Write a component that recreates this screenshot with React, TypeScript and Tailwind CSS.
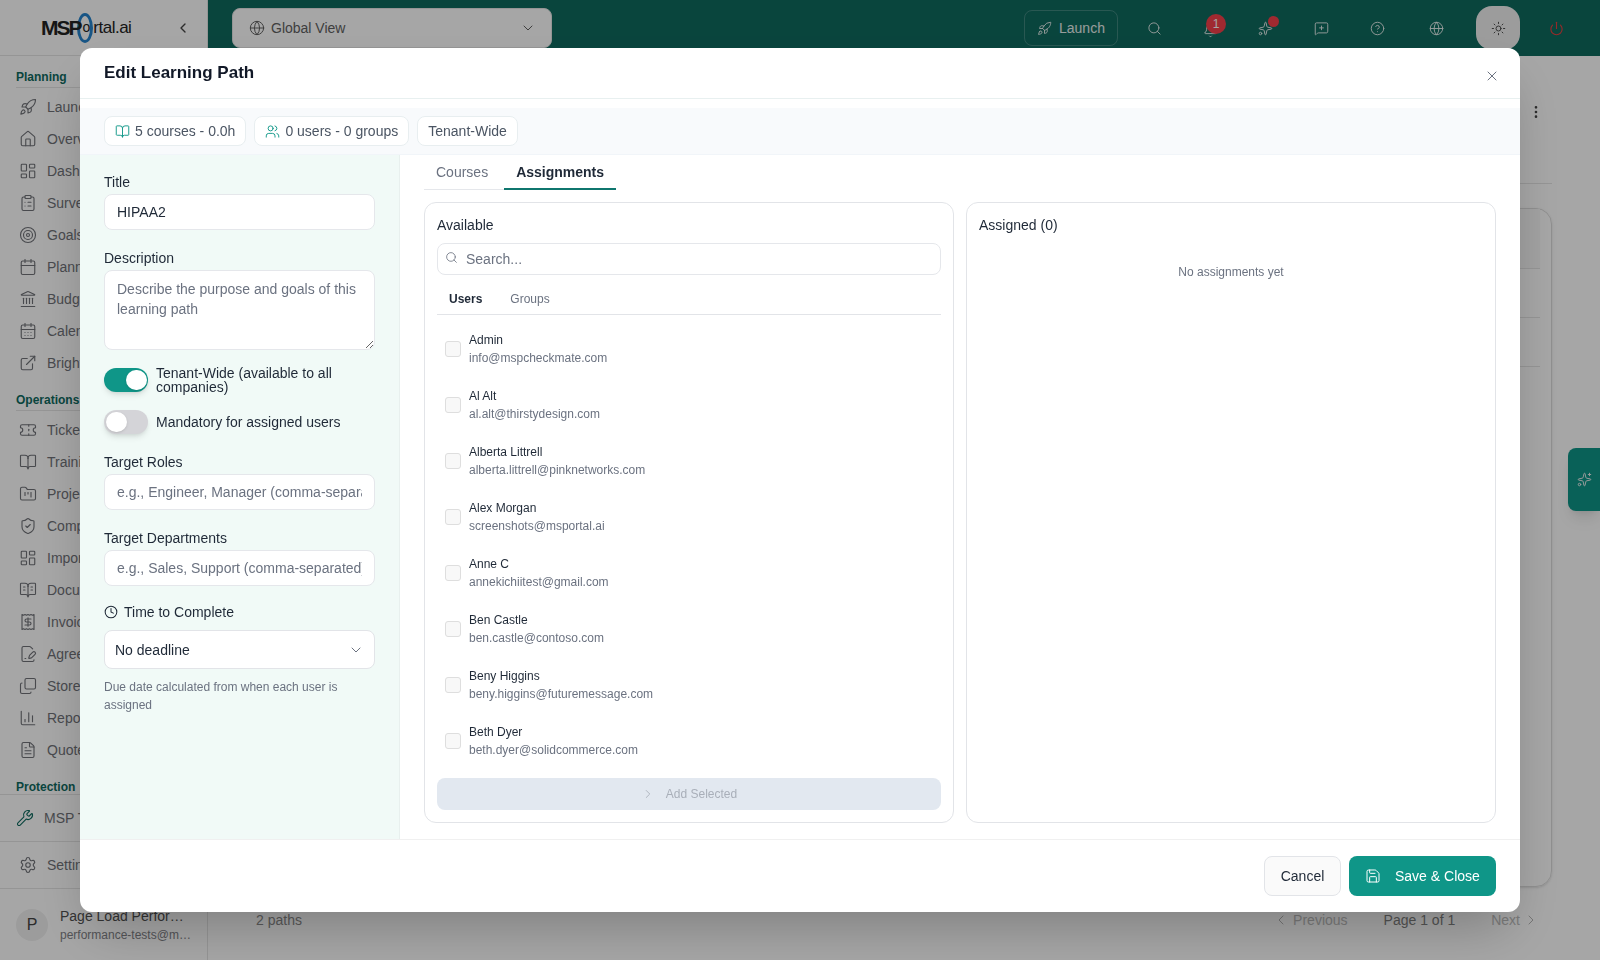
import React from "react";
import {
  Rocket, Home, LayoutDashboard, ClipboardList, Target, Calendar, Landmark, CalendarDays, ExternalLink,
  Ticket, BookOpen, FolderKanban, ShieldCheck, BookOpenText, Receipt, FileSignature, Copy, ChartColumn, FileText,
  Wrench, Settings, Globe, ChevronDown, ChevronLeft, ChevronRight, Search, Bell, Sparkles, MessageSquarePlus,
  CircleHelp, Sun, Power, EllipsisVertical, X, Users, Clock, Save,
} from "lucide-react";

const planning: [any, string, string?][] = [
  [Rocket, "Launch"], [Home, "Overview"], [LayoutDashboard, "Dashboard"], [ClipboardList, "Surveys"], [Target, "Goals"],
  [Calendar, "Planner"], [Landmark, "Budget"], [CalendarDays, "Calendar"], [ExternalLink, "BrightGauge"],
];
const operations: [any, string, string?][] = [
  [Ticket, "Tickets"], [BookOpen, "Training"], [FolderKanban, "Projects"], [ShieldCheck, "Compliance"], [LayoutDashboard, "Import"],
  [BookOpenText, "Documents"], [Receipt, "Invoices"], [FileSignature, "Agreements"], [Copy, "Storefront", "-scale-y-100"],
  [ChartColumn, "Reports"], [FileText, "Quotes"],
];
const users = [
  ["Admin", "info@mspcheckmate.com"],
  ["Al Alt", "al.alt@thirstydesign.com"],
  ["Alberta Littrell", "alberta.littrell@pinknetworks.com"],
  ["Alex Morgan", "screenshots@msportal.ai"],
  ["Anne C", "annekichiitest@gmail.com"],
  ["Ben Castle", "ben.castle@contoso.com"],
  ["Beny Higgins", "beny.higgins@futuremessage.com"],
  ["Beth Dyer", "beth.dyer@solidcommerce.com"],
];

function NavItem({ icon: Icon, label, cls }: { icon: any; label: string; cls?: string }) {
  return (
    <div className="flex h-8 items-center gap-[10px] pl-[19px] text-sm text-[#707278]">
      <Icon size={18} strokeWidth={1.5} className={cls} />
      <span>{label}</span>
    </div>
  );
}

function SectionLabel({ children }: { children: React.ReactNode }) {
  return (
    <div className="ml-4 border-b border-[#e5e5e5] pb-[2px] text-xs leading-[16px] font-semibold text-[#0f6a5f]">{children}</div>
  );
}

function TopIcon({ children, cls = "" }: { children: React.ReactNode; cls?: string }) {
  return <div className={`flex items-center justify-center ${cls}`}>{children}</div>;
}

function Toggle({ on }: { on?: boolean }) {
  return (
    <div className={`flex h-6 w-11 shrink-0 items-center rounded-full px-[1.5px] shadow-md ${on ? "justify-end bg-[#0f9688]" : "justify-start bg-[#d4d4d8]"}`}>
      <div className="h-5 w-[21px] rounded-full bg-white shadow" />
    </div>
  );
}

function Label({ children }: { children: React.ReactNode }) {
  return <div className="text-sm leading-5 text-[#1f2937]">{children}</div>;
}

function TextField({ value, placeholder }: { value?: string; placeholder?: string }) {
  return (
    <input
      readOnly
      defaultValue={value}
      placeholder={placeholder}
      className="mt-[2px] block h-[36px] w-full rounded-lg border border-[#e5e7eb] bg-white px-3 text-sm text-[#1f2937] outline-none placeholder:text-[#6b7280]"
    />
  );
}

export default function App() {
  return (
    <div className="relative flex h-screen w-screen overflow-hidden bg-white font-['Liberation_Sans',Arial,sans-serif]">
      {/* Page behind the dialog */}
      <aside className="flex h-full w-[208px] shrink-0 flex-col border-r border-[#e5e5e5]">
        <div className="relative flex h-[56px] shrink-0 items-center border-b border-[#e5e5e5] pl-[41px] text-[#222]">
          <div className="absolute top-[13px] left-[77px] h-[30px] w-[16px] rounded-[50%] border-[3.5px] border-[#2583cc]" />
          <span className="relative text-[21px] font-bold tracking-[-2px]">MSP</span>
          <span className="relative ml-[2px] text-[14px] font-medium">o</span>
          <span className="relative ml-[3px] text-[17px] tracking-[-0.5px]">rtal.ai</span>
          <ChevronLeft size={16} strokeWidth={2} className="absolute top-[20px] left-[175px] text-[#444]" />
        </div>
        <div className="h-[738px] shrink-0 overflow-hidden pt-[13px]">
          <SectionLabel>Planning</SectionLabel>
          <div className="mt-[3px]">
            {planning.map(([I, l, c]) => <NavItem key={l} icon={I} label={l} cls={c} />)}
          </div>
          <div className="mt-[13px]">
            <SectionLabel>Operations</SectionLabel>
          </div>
          <div className="mt-[3px]">
            {operations.map(([I, l, c]) => <NavItem key={l} icon={I} label={l} cls={c} />)}
          </div>
          <div className="mt-[13px]">
            <SectionLabel>Protection</SectionLabel>
          </div>
        </div>
        <div className="flex h-[47px] shrink-0 items-center gap-[10px] border-t border-[#e5e5e5] pl-4 text-sm text-[#707278]">
          <Wrench size={18} strokeWidth={1.5} className="text-[#0f6a5f]" />
          <span>MSP Tools</span>
        </div>
        <div className="flex h-[47px] shrink-0 items-center gap-[10px] border-t border-[#e5e5e5] pl-[19px] text-sm text-[#707278]">
          <Settings size={18} strokeWidth={1.5} />
          <span>Settings</span>
        </div>
        <div className="flex flex-1 items-center gap-3 border-t border-[#e5e5e5] pl-4 pr-4">
          <div className="flex h-8 w-8 shrink-0 items-center justify-center rounded-full bg-[#f0f0f0] text-base text-[#444]">P</div>
          <div className="min-w-0 flex-1">
            <div className="truncate text-sm leading-5 text-[#505050]">Page Load Performance Tests</div>
            <div className="truncate text-xs leading-[18px] text-[#7f8186]">performance-tests@msportal.ai</div>
          </div>
        </div>
      </aside>

      <div className="flex min-w-0 flex-1 flex-col">
        <header className="flex h-[56px] shrink-0 items-center bg-[#0f6a5f] pl-6 text-[#e8f0ee]">
          <div className="flex h-10 w-[320px] items-center rounded-lg border border-[#e5e5e5] bg-white pr-[15px] pl-[16px] text-sm text-[#616161]">
            <Globe size={16} strokeWidth={1.5} />
            <span className="ml-[6px] flex-1">Global View</span>
            <ChevronDown size={16} strokeWidth={1.5} />
          </div>
          <div className="ml-[472px] flex h-[36px] w-[94px] items-center gap-[7px] rounded-lg border border-white/20 pl-[12px] text-sm">
            <Rocket size={15} strokeWidth={1.5} />
            <span>Launch</span>
          </div>
          <TopIcon cls="ml-[29px]"><Search size={15} strokeWidth={1.5} /></TopIcon>
          <div className="relative ml-[41px] flex items-center justify-center pt-1">
            <Bell size={15} strokeWidth={1.5} />
            <div className="absolute top-[-5px] left-[3px] flex h-5 w-5 items-center justify-center rounded-full bg-[#f4404a] text-[12px] text-white">1</div>
          </div>
          <div className="relative ml-[40px] flex items-center justify-center">
            <Sparkles size={15} strokeWidth={1.5} />
            <div className="absolute top-[-5px] left-[10px] h-[11px] w-[11px] rounded-full bg-[#f4404a]" />
          </div>
          <TopIcon cls="ml-[41px]"><MessageSquarePlus size={15} strokeWidth={1.5} /></TopIcon>
          <TopIcon cls="ml-[41px]"><CircleHelp size={15} strokeWidth={1.5} /></TopIcon>
          <TopIcon cls="ml-[44px]"><Globe size={15} strokeWidth={1.5} /></TopIcon>
          <div className="ml-[32px] flex h-11 w-11 items-center justify-center rounded-2xl bg-[#f0f0f0] text-[#444]">
            <Sun size={15} strokeWidth={1.5} />
          </div>
          <TopIcon cls="ml-[29px] text-[#e8403f]"><Power size={15} strokeWidth={1.75} /></TopIcon>
        </header>

        <main className="flex min-h-0 flex-1 flex-col">
          <div className="mr-12 ml-6 flex h-[128px] shrink-0 items-center justify-end border-b border-[#e5e5e5] pr-2 pb-[16px] text-[#444]">
            <EllipsisVertical size={16} strokeWidth={2} />
          </div>
          <div className="mt-6 mr-12 ml-6 flex h-[679px] shrink-0 flex-col rounded-2xl border border-[#dcdcdc] pr-[11px] shadow-sm">
            <div className="h-[60px] shrink-0 border-b border-[#e5e5e5] bg-[#f9f9f9]" />
            <div className="h-[49px] shrink-0 border-b border-[#e5e5e5]" />
            <div className="h-[49px] shrink-0 border-b border-[#e5e5e5]" />
          </div>
          <div className="flex flex-1 items-center justify-between pr-[61px] pb-[7px] pl-6 text-sm">
            <span className="ml-6 text-[#8a8a8a]">2 paths</span>
            <div className="flex items-center">
              <ChevronLeft size={16} strokeWidth={1.5} className="text-[#b5b5b5]" />
              <span className="ml-1 text-[#bcbcbc]">Previous</span>
              <span className="ml-[36px] text-[#818181]">Page 1 of 1</span>
              <span className="ml-[36px] text-[#bcbcbc]">Next</span>
              <ChevronRight size={16} strokeWidth={1.5} className="ml-[3px] text-[#b5b5b5]" />
            </div>
          </div>
        </main>
      </div>

      <div className="absolute top-[448px] right-0 flex h-[63px] w-8 items-center justify-center rounded-l-lg bg-[#0f9688] text-[#f0f0f0] shadow-lg">
        <Sparkles size={15} strokeWidth={1.5} />
      </div>

      {/* Overlay and dialog */}
      <div className="fixed inset-0 flex items-center justify-center bg-black/35">
        <div className="flex h-[864px] w-[1440px] flex-col overflow-hidden rounded-xl bg-white shadow-2xl">
          <div className="relative flex h-[51px] shrink-0 items-center border-b border-[#e8f0f0] pl-6">
            <h2 className="text-[17px] font-semibold text-[#111827]">Edit Learning Path</h2>
            <X size={16} strokeWidth={1.5} className="absolute top-[20px] right-5 text-[#6b7280]" />
          </div>

          <div className="mt-[9px] flex h-[47px] shrink-0 items-center gap-2 border-b border-[#f1f5f9] bg-[#f8fafc] pl-6 text-sm text-[#4b5563]">
            <div className="flex h-[30px] items-center gap-[5px] rounded-lg border border-[#e8eef0] bg-white px-[10px]">
              <BookOpen size={15} strokeWidth={1.5} className="text-[#0f9688]" />
              <span>5 courses - 0.0h</span>
            </div>
            <div className="flex h-[30px] items-center gap-[5px] rounded-lg border border-[#e8eef0] bg-white px-[10px]">
              <Users size={15} strokeWidth={1.5} className="text-[#0f9688]" />
              <span>0 users - 0 groups</span>
            </div>
            <div className="flex h-[30px] items-center rounded-lg border border-[#e8eef0] bg-white px-[10px]">
              <span>Tenant-Wide</span>
            </div>
          </div>

          <div className="flex min-h-0 flex-1">
            <div className="w-[320px] shrink-0 border-r border-[#e8f0ee] bg-[#f1faf7] px-6 pt-[17px]">
              <Label>Title</Label>
              <TextField value="HIPAA2" />
              <div className="mt-[18px]"><Label>Description</Label></div>
              <textarea
                readOnly
                placeholder="Describe the purpose and goals of this learning path"
                className="mt-[2px] block h-[80px] w-full rounded-lg border border-[#e5e7eb] bg-white px-3 py-2 text-sm leading-5 text-[#1f2937] outline-none placeholder:text-[#6b7280]"
              />
              <div className="mt-4 flex items-center gap-2">
                <Toggle on />
                <span className="text-sm leading-[14px] text-[#1f2937]">Tenant-Wide (available to all companies)</span>
              </div>
              <div className="mt-4 flex items-center gap-2">
                <Toggle />
                <span className="text-sm leading-[14px] text-[#1f2937]">Mandatory for assigned users</span>
              </div>
              <div className="mt-[18px]"><Label>Target Roles</Label></div>
              <TextField placeholder="e.g., Engineer, Manager (comma-separated)" />
              <div className="mt-[18px]"><Label>Target Departments</Label></div>
              <TextField placeholder="e.g., Sales, Support (comma-separated)" />
              <div className="mt-4 flex items-center gap-[6px] text-sm leading-5 text-[#1f2937]">
                <Clock size={14} strokeWidth={1.75} />
                <span>Time to Complete</span>
              </div>
              <div className="mt-[8px] flex h-[39px] items-center justify-between rounded-lg border border-[#e2e4e8] bg-white pr-[10px] pl-[10px] text-sm text-[#1f2937]">
                <span>No deadline</span>
                <ChevronDown size={16} strokeWidth={1.5} className="text-[#6b7280]" />
              </div>
              <p className="mt-[9px] text-xs leading-[18px] text-[#6b7280]">Due date calculated from when each user is assigned</p>
            </div>

            <div className="flex min-w-0 flex-1 flex-col px-6">
              <div className="flex h-[35px] w-fit shrink-0 gap-1 border-b border-[#e5e7eb] text-sm">
                <div className="flex items-center px-3 text-[#6b7280]">Courses</div>
                <div className="-mb-px flex items-center border-b-2 border-[#0f766e] px-3 font-semibold text-[#1f2937]">Assignments</div>
              </div>
              <div className="mt-3 mb-4 grid min-h-0 flex-1 grid-cols-2 gap-3">
                <div className="flex min-h-0 flex-col rounded-xl border border-[#e2e4e8] p-3">
                  <div className="text-sm leading-5 text-[#1f2937]">Available</div>
                  <div className="relative mt-2 shrink-0">
                    <Search size={13} strokeWidth={1.5} className="absolute top-[8px] left-[8px] text-[#6b7280]" />
                    <input
                      readOnly
                      placeholder="Search..."
                      className="block h-8 w-full rounded-lg border border-[#e5e7eb] bg-white pr-3 pl-7 text-sm text-[#1f2937] outline-none placeholder:text-[#6b7280]"
                    />
                  </div>
                  <div className="mt-[8px] flex h-[32px] shrink-0 items-center gap-1 border-b border-[#e2e4e8] text-xs">
                    <span className="px-3 font-semibold text-[#1f2937]">Users</span>
                    <span className="px-3 text-[#6b7280]">Groups</span>
                  </div>
                  <div className="mt-[6px] min-h-0 flex-1 overflow-hidden">
                    {users.map(([n, e]) => (
                      <div key={e} className="flex h-14 items-center gap-2 px-2">
                        <div className="h-4 w-4 shrink-0 rounded-[3px] border border-[#dedede] bg-[#f8f8f8]" />
                        <div className="text-xs leading-[18px]">
                          <div className="text-[#1f2937]">{n}</div>
                          <div className="text-[#6b7280]">{e}</div>
                        </div>
                      </div>
                    ))}
                  </div>
                  <div className="flex h-8 shrink-0 items-center justify-center gap-[11px] rounded-lg bg-[#e2e8f0] text-xs text-[#a9afb9]">
                    <ChevronRight size={14} strokeWidth={1.5} />
                    <span>Add Selected</span>
                  </div>
                </div>
                <div className="flex min-h-0 flex-col rounded-xl border border-[#e2e4e8] p-3">
                  <div className="text-sm leading-5 text-[#1f2937]">Assigned (0)</div>
                  <div className="mt-[29px] text-center text-xs leading-4 text-[#6b7280]">No assignments yet</div>
                </div>
              </div>
            </div>
          </div>

          <div className="flex h-[73px] shrink-0 items-center justify-end gap-2 border-t border-[#f0f0f0] pr-6">
            <div className="flex h-10 w-[77px] items-center justify-center rounded-lg border border-[#e2e4e8] bg-[#fafafa] text-sm font-medium text-[#1f2937]">Cancel</div>
            <div className="flex h-10 w-[147px] items-center gap-[14px] rounded-lg bg-[#0f9688] pl-4 text-sm font-medium text-white">
              <Save size={16} strokeWidth={1.5} />
              <span>Save &amp; Close</span>
            </div>
          </div>
        </div>
      </div>
    </div>
  );
}
